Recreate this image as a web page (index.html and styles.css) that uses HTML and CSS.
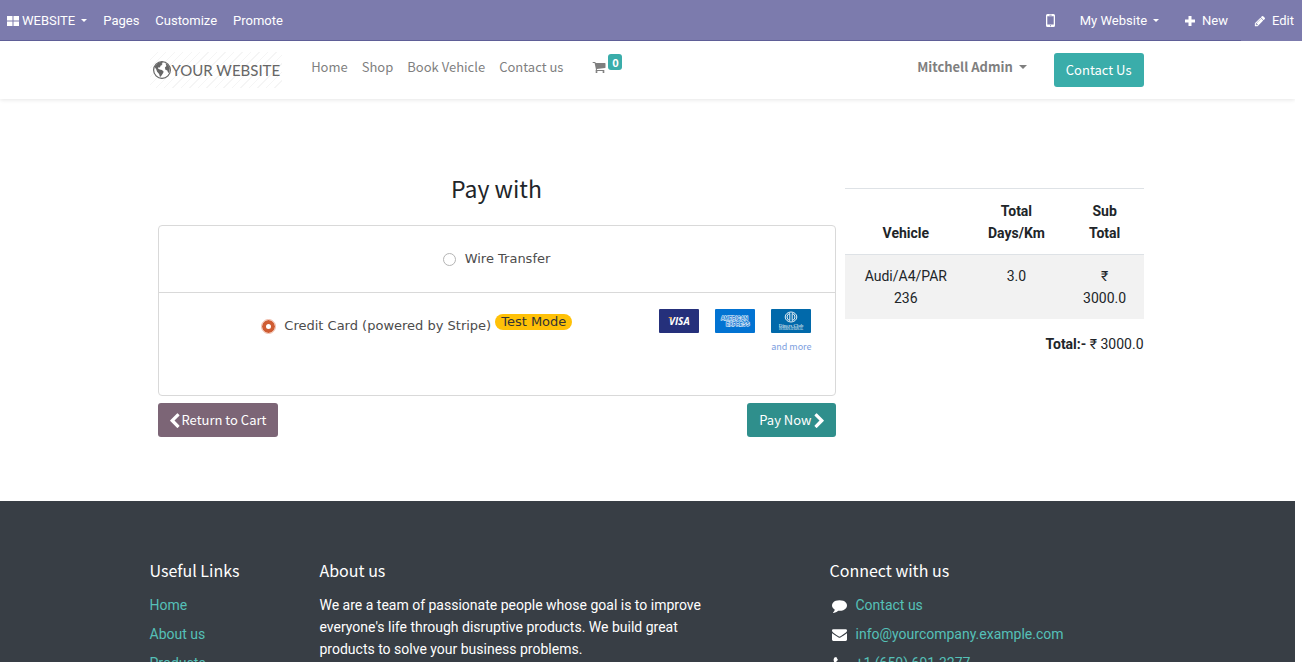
FILE: index.html
```
<!DOCTYPE html>
<html lang="en">
<head>
<meta charset="utf-8">
<title>Payment | My Website</title>
<link rel="stylesheet" href="styles.css">
</head>
<body>
<svg class="sprite" aria-hidden="true">
  <symbol id="chevron-left" viewBox="400 0 1100 1650"><path d="M1427 301l-531 531 531 531q19 19 19 45t-19 45l-166 166q-19 19-45 19t-45-19l-742-742q-19-19-19-45t19-45l742-742q19-19 45-19t45 19l166 166q19 19 19 45t-19 45z"/></symbol>
  <symbol id="pencil" viewBox="0 0 1792 1792"><path d="M491 1536l91-91-235-235-91 91v107h128v128h107zM1014 608q0-22-22-22-10 0-17 7l-542 542q-7 7-7 17 0 22 22 22 10 0 17-7l542-542q7-7 7-17zM960 416l416 416-832 832h-416v-416zM1643 512q0 53-37 90l-166 166-416-416 166-165q36-38 90-38 53 0 91 38l235 234q37 39 37 91z"/></symbol>
  <symbol id="cart" viewBox="0 0 1792 1792"><path d="M704 1536q0 52-38 90t-90 38-90-38-38-90 38-90 90-38 90 38 38 90zm896 0q0 52-38 90t-90 38-90-38-38-90 38-90 90-38 90 38 38 90zm128-1088v512q0 24-16.500 42.500t-40.500 21.500l-1044 122q13 60 13 70 0 16-24 64h920q26 0 45 19t19 45-19 45-45 19h-1024q-26 0-45-19t-19-45q0-11 8-31.500t16-36 21.500-40 15.500-29.500l-177-823h-204q-26 0-45-19t-19-45 19-45 45-19h256q16 0 28.500 6.500t19.500 15.500 13 24.500 8 26 5.500 29.500 4.500 26h1201q26 0 45 19t19 45z"/></symbol>
  <symbol id="comment" viewBox="0 0 1792 1792"><path d="M1792 896q0 174-120 321.500t-326 233-450 85.500q-70 0-145-8-198 175-460 242-49 14-114 22h-5q-15 0-27-10.500t-16-27.500v-1q-3-4-.5-12t2-10 4.500-9.500l6-9 7-8.500 8-9q7-8 31-34.500t34.500-38 31-39.500 32.500-51 27-59 26-76q-157-89-247.500-220t-90.500-281q0-174 120-321.500t326-233 450-85.500 450 85.500 326 233 120 321.500z"/></symbol>
  <symbol id="envelope" viewBox="0 0 1792 1792"><path d="M1792 710v794q0 66-47 113t-113 47h-1472q-66 0-113-47t-47-113v-794q44 49 101 87 362 246 497 345 57 42 92.500 65.500t94.500 48 110 24.500h2q51 0 110-24.500t94.500-48 92.500-65.500q170-123 498-345 57-39 100-87zm0-294q0 79-49 151t-122 123q-376 261-468 325-10 7-42.500 31t-54 38.500-52 32.500-57.500 27-50 9h-2q-23 0-50-9t-57.500-27-52-32.500-54-38.500-42.500-31q-91-64-262-182.500t-205-142.500q-62-42-117-115.500t-55-136.500q0-78 41.500-130t118.500-52h1472q65 0 112.500 47t47.500 113z"/></symbol>
  <symbol id="phone" viewBox="0 0 1792 1792"><path d="M1600 1240q0 27-10 70.500t-21 68.500q-21 50-122 106-94 51-186 51-27 0-53-3.500t-57.500-12.500-47-14.500-55.500-20.500-49-18q-98-35-175-83-127-79-264-216t-216-264q-48-77-83-175-3-9-18-49t-20.500-55.500-14.500-47-12.500-57.500-3.500-53q0-92 51-186 56-101 106-122 25-11 68.500-21t70.500-10q14 0 21 3 18 6 53 76 11 19 30 54t35 63.500 31 53.500q3 4 17.500 25t21.500 35.500 7 28.500q0 20-28.500 50t-62 55-62 53-28.500 46q0 9 5 22.500t8.500 20.500 14 24 11.500 19q76 137 174 235t235 174q2 1 19 11.500t24 14 20.500 8.500 22.500 5q18 0 46-28.500t53-62 55-62 50-28.500q14 0 28.500 7t35.500 21.500 25 17.500q25 15 53.500 31t63.500 35 54 30q70 35 76 53 3 7 3 21z"/></symbol>
</svg>

<nav class="topbar">
  <div class="topbar-main">
    <button class="topbar-item brand" type="button">
      <svg class="icon" viewBox="0 0 12 12"><path d="M0 1h5.500v4.500H0zM6.500 1H12v4.500H6.500zM0 6.500h5.500V11H0zM6.500 6.500H12V11H6.500z"/></svg>WEBSITE<span class="caret"></span>
    </button>
    <button class="topbar-item" type="button">Pages</button>
    <button class="topbar-item" type="button">Customize</button>
    <button class="topbar-item" type="button">Promote</button>
    <span class="spacer"></span>
    <button class="topbar-item mobile" type="button" aria-label="Mobile preview">
      <svg class="phone-icon" viewBox="0 0 9 13"><path fill-rule="evenodd" d="M1.500 0h6A1.500 1.500 0 0 1 9 1.500v10A1.500 1.500 0 0 1 7.500 13h-6A1.500 1.500 0 0 1 0 11.500v-10A1.500 1.500 0 0 1 1.500 0zM1.300 2.200v8.300h6.400V2.200zM3.300.8v.6h2.400V.8zM4 11.300v1h1v-1z"/></svg>
    </button>
    <button class="topbar-item site" type="button">My Website<span class="caret"></span></button>
    <button class="topbar-item new" type="button"><svg class="icon" viewBox="0 0 12 12"><path d="M4.500 1h3v3.500H11v3H7.500V11h-3V7.500H1v-3h3.500z"/></svg>New</button>
  </div>
  <button class="topbar-item edit" type="button"><svg class="icon" viewBox="0 0 12 12"><use href="#pencil"/></svg>Edit</button>
</nav>

<div class="page">
  <header class="site-header">
    <div class="container header-row">
      <a class="logo" href="#">
        <svg class="globe" viewBox="0 0 20 20"><circle cx="10" cy="10" r="8.400" fill="#fff" stroke="#666" stroke-width="1.200"/><path d="M3 6L6 3l3.500-1.300 1.500 1L9.500 4l1 .8-2 1-.5 1.700-1.600-.2-.4 1.200 1.800 1 2.200.6 1.700 1.600-1 2-1.700 2.600-1 .6-.9-3-2-2.200-.8-2.200L3 7.500zM13.500 3.500l2.300 1 1.900 3.500-.4 4-1.100 1-.9-2.400-1.900-.8-.5-2.200 1.500-1.600z" fill="#666"/></svg><span>YOUR WEBSITE</span>
      </a>
      <nav class="menu">
        <a href="#">Home</a>
        <a href="#">Shop</a>
        <a href="#">Book Vehicle</a>
        <a href="#">Contact us</a>
        <a class="cart" href="#" aria-label="Cart"><svg viewBox="0 0 16 16"><use href="#cart"/></svg><sup class="count">0</sup></a>
      </nav>
      <span class="spacer"></span>
      <button class="user" type="button">Mitchell Admin<span class="caret"></span></button>
      <a class="btn btn-primary" href="#">Contact Us</a>
    </div>
  </header>

  <main class="container checkout">
    <section class="payment">
      <h3 class="pay-title">Pay with</h3>
      <form class="pay-form">
        <div class="methods">
          <div class="method">
            <label class="choice"><input type="radio" name="acquirer"><span>Wire Transfer</span></label>
          </div>
          <div class="method method-card">
            <div class="choice-area">
              <label class="choice"><input type="radio" name="acquirer" checked><span>Credit Card (powered by Stripe)</span></label>
              <span class="badge">Test Mode</span>
            </div>
            <ul class="cards">
              <li><svg class="card" viewBox="0 0 40 24" role="img" aria-label="Visa"><rect width="40" height="24" rx="1" fill="#25307b"/><text class="visa" x="10" y="16">VISA</text><path d="M9 8h3l1.300 3.500Q11.500 9 9 8z" fill="#eda63b"/></svg></li>
              <li><svg class="card" viewBox="0 0 40 24" role="img" aria-label="American Express"><rect width="40" height="24" rx="1" fill="#0273d2"/><text class="amex" x="6" y="11">AMERICAN</text><text class="amex" x="11" y="17">EXPRESS</text></svg></li>
              <li><svg class="card" viewBox="0 0 40 24" role="img" aria-label="Diners Club"><rect width="40" height="24" rx="1" fill="#0169aa"/><ellipse cx="20" cy="8" rx="5.800" ry="5" fill="none" stroke="#fff" stroke-width=".9"/><path d="M18.800 4.500a3.600 3.600 0 0 0 0 7zM21.200 4.500a3.600 3.600 0 0 1 0 7z" fill="none" stroke="#fff" stroke-width=".9"/><text class="diners" x="20" y="18">Diners Club</text><text class="intl" x="20" y="21">INTERNATIONAL</text></svg>
                <a class="more" href="#">and more</a></li>
            </ul>
          </div>
        </div>
        <div class="actions">
          <a class="btn btn-secondary" href="#"><svg><use href="#chevron-left"/></svg>Return to Cart</a>
          <button class="btn btn-pay" type="submit">Pay Now<svg class="flip"><use href="#chevron-left"/></svg></button>
        </div>
      </form>
    </section>
    <aside class="summary">
      <table class="items">
        <thead><tr><th class="col-vehicle">Vehicle</th><th class="col-days">Total Days/Km</th><th>Sub Total</th></tr></thead>
        <tbody><tr><td>Audi/A4/PAR 236</td><td>3.0</td><td>₹ 3000.0</td></tr></tbody>
      </table>
      <p class="total"><strong>Total:-</strong> ₹ 3000.0</p>
    </aside>
  </main>

  <footer class="footer">
    <div class="container footer-grid">
      <section>
        <h5>Useful Links</h5>
        <ul class="links"><li><a href="#">Home</a></li><li><a href="#">About us</a></li><li><a href="#">Products</a></li></ul>
      </section>
      <section>
        <h5>About us</h5>
        <p class="about">We are a team of passionate people whose goal is to improve everyone's life through disruptive products. We build great products to solve your business problems.</p>
      </section>
      <section>
        <h5>Connect with us</h5>
        <ul class="links contact">
          <li><svg viewBox="0 0 16 16"><use href="#comment"/></svg><a href="#">Contact us</a></li>
          <li><svg viewBox="0 0 16 16"><use href="#envelope"/></svg><a href="#">info@yourcompany.example.com</a></li>
          <li><svg viewBox="0 0 16 16"><use href="#phone"/></svg><a href="#">+1 (650) 691-3277</a></li>
        </ul>
      </section>
    </div>
  </footer>
</div>
</body>
</html>
```
FILE: styles.css
```
* { box-sizing: border-box; }

body {
  margin: 0;
  height: 100vh;
  display: flex;
  flex-direction: column;
  background: #fff;
  color: #212529;
  font: 14px/22px Roboto, "DejaVu Sans", sans-serif;
}

h3, h5, p, ul { margin: 0; padding: 0; font-weight: 400; }
ul { list-style: none; }
a { color: inherit; text-decoration: none; }
button { border: 0; background: none; color: inherit; font: inherit; cursor: pointer; }
svg { display: block; flex: none; fill: currentColor; }
.sprite { position: absolute; width: 0; height: 0; }
.spacer { flex: 1; }

.caret {
  border: 3px solid transparent;
  border-top: 3px solid currentColor;
  border-bottom: 0;
  margin-left: 6px;
}

/* Editor bar */
.topbar {
  flex: none;
  display: flex;
  height: 41px;
  background: #7c7bad;
  color: #fff;
  font-size: 13px;
}
.topbar-main { flex: 1; display: flex; padding: 1px 0 0 7px; border-bottom: 1px solid #5f5e97; }
.topbar-item { display: flex; align-items: center; padding: 0; margin-right: 16px; }
.topbar-item .icon { width: 12px; height: 12px; }
.brand { gap: 3px; }
.brand .caret { margin-left: 3px; }
.phone-icon { width: 9px; height: 13px; }
.mobile, .site { margin-right: 25px; }
.new { gap: 6px; margin-right: 13px; }
.edit { gap: 6px; margin: 0; padding: 0 8px 0 13px; }

/* Scrolling page */
.page { flex: 1; min-height: 0; overflow-y: auto; scrollbar-width: none; margin-right: 7px; }
.container { width: 100%; max-width: 1026px; margin: 0 auto; padding: 0 17px 0 15px; }

.site-header {
  font: 13px/20px "Noto Sans CJK SC", sans-serif;
  color: #7f7f7f;
  box-shadow: 0 1px 4px rgba(0, 0, 0, .1);
}
.header-row { display: flex; align-items: center; height: 58px; }
.logo {
  display: flex;
  align-items: center;
  height: 36px;
  padding: 0 2px;
  color: #666;
  font: 15px/20px Lato, sans-serif;
  background: repeating-linear-gradient(135deg, #fff 0 5px, #f5f5f5 5px 6px);
}
.globe { width: 20px; height: 20px; }
.menu { display: flex; align-items: center; gap: 14px; margin-left: 29px; padding-bottom: 6px; }
.cart { display: flex; align-items: center; gap: 2px; height: 20px; margin-left: 15px; }
.cart svg { width: 14px; height: 14px; }
.count {
  width: 14px;
  height: 16px;
  margin-bottom: 10px;
  border-radius: 3px;
  background: #3aadaa;
  color: #fff;
  font: 700 11px/16px "Noto Sans CJK SC", sans-serif;
  text-align: center;
}
.user { display: flex; align-items: center; padding: 0 0 6px; margin-right: 27px; font-weight: 700; }
.user .caret { border-width: 4px 4px 0; }

.btn {
  display: flex;
  align-items: center;
  gap: 2px;
  height: 34px;
  padding: 0 12px;
  border-radius: 3px;
  color: #fff;
  font: 13px/20px "Noto Sans CJK SC", sans-serif;
}
.btn svg { width: 10px; height: 15px; }
.btn-primary { background: #3aadaa; }
.btn-secondary { background: #7c6576; }
.btn-pay { background: #2f8f8c; }
.flip { transform: scaleX(-1); }

/* Checkout */
.checkout { display: flex; align-items: flex-start; gap: 9px; padding-top: 74px; padding-bottom: 64px; }
.payment { flex: 1; padding-left: 8px; }
.pay-title { font: 23px/30px "Noto Sans CJK SC", sans-serif; text-align: center; }
.methods {
  margin-top: 22px;
  border: 1px solid #d9d9d9;
  border-radius: 4px;
  color: #4c4c4c;
  font: 13px/20px "DejaVu Sans", sans-serif;
}
.method { display: flex; justify-content: center; padding: 23px; }
.method-card { min-height: 103px; padding: 16px 23px 16px 17px; border-top: 1px solid #d9d9d9; }
.choice { display: flex; align-items: center; gap: 9px; }
.choice input {
  appearance: none;
  width: 13px;
  height: 13px;
  margin: 0;
  border: 1px solid #b4b4b4;
  border-radius: 50%;
}
.choice input:checked {
  border: 4px solid #cf5c32;
  background: #fff;
  outline: 1px solid #f0b9a5;
}
.choice-area { flex: 1; display: flex; justify-content: center; align-items: flex-start; gap: 4px; }
.choice-area .choice { padding-top: 7px; }
.badge { margin-top: 5px; padding: 0 6px; border-radius: 8px; background: #ffc107; color: #333; line-height: 16px; }
.cards { display: flex; gap: 16px; }
.card { width: 40px; height: 24px; }
.more { display: block; margin-top: 4px; color: #7c9ee0; font: 9px/20px "Noto Sans CJK SC", sans-serif; }
.visa { font: italic 700 10px "Open Sans", sans-serif; fill: #fff; }
.amex { font: 700 5px "Liberation Sans", sans-serif; fill: #0273d2; stroke: #fff; stroke-width: 1px; paint-order: stroke; }
.diners { font: 5px "Liberation Serif", serif; fill: #fff; text-anchor: middle; }
.intl { font: 3px "Liberation Serif", serif; fill: #fff; text-anchor: middle; }
.actions { display: flex; justify-content: space-between; margin-top: 7px; }

.summary { width: 299px; padding-top: 15px; }
.items { width: 100%; border-collapse: collapse; table-layout: fixed; text-align: center; }
.col-vehicle { width: 41%; }
.col-days { width: 33%; }
.items th, .items td { padding: 10px 14px; vertical-align: top; }
.items th { padding-top: 11px; border-top: 1px solid #dee2e6; border-bottom: 1px solid #dee2e6; vertical-align: bottom; }
.items td { background: #f2f2f2; }
.total { margin-top: 14px; text-align: right; }

/* Footer */
.footer { background: #383e45; color: #fff; }
.footer-grid { display: grid; grid-template-columns: 170fr 510fr 314fr; padding-top: 57px; padding-bottom: 48px; }
.footer h5 { font: 16px/24px "Noto Sans CJK SC", sans-serif; margin-bottom: 12px; }
.links li { margin-bottom: 7px; }
.links a { color: #55c0b8; }
.contact li { display: flex; align-items: center; gap: 9px; padding-left: 2px; }
.contact svg { width: 15px; height: 15px; }
.about { max-width: 410px; }
```
